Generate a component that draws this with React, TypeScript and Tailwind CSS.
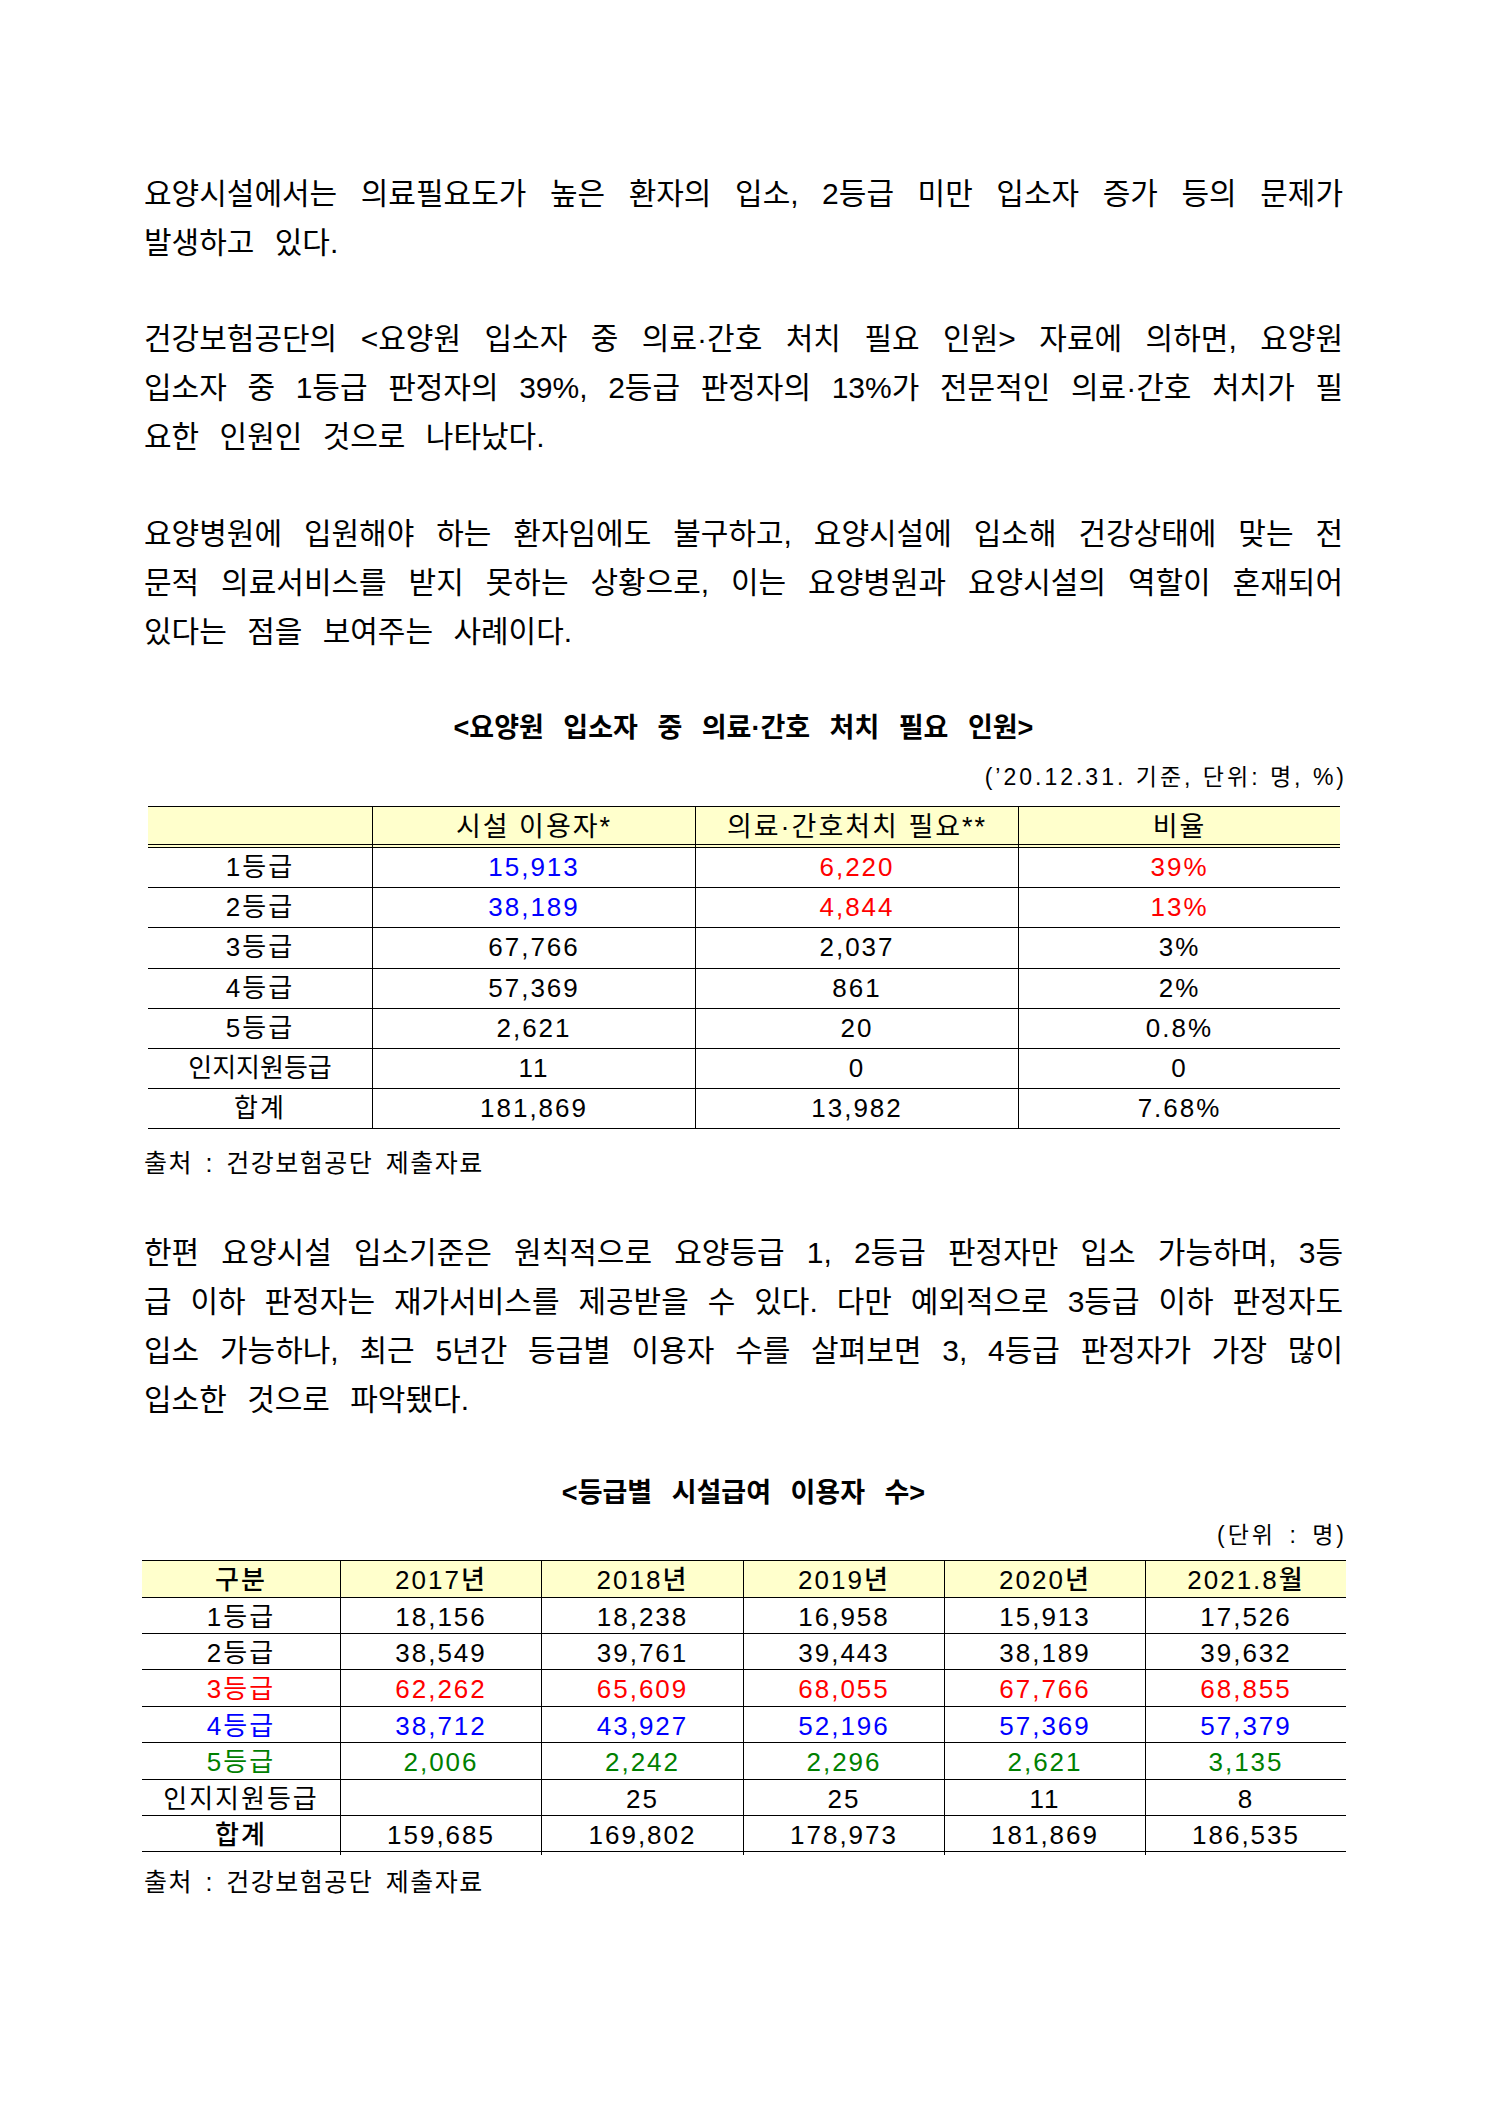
const font = "font-['Liberation_Sans','Noto_Sans_CJK_KR',sans-serif]"

type Line = { text: string; full?: boolean }

function Paragraph({ lines, className = "" }: { lines: Line[]; className?: string }) {
    return (
        <div className={`text-[30px] leading-[49px] ${className}`}>
            {lines.map((line, i) => (
                <div
                    key={i}
                    className={
                        line.full
                            ? "text-justify whitespace-nowrap [text-align-last:justify]"
                            : "whitespace-nowrap [word-spacing:12px]"
                    }
                >
                    {line.text}
                </div>
            ))}
        </div>
    )
}

type Cell = { v: string; c?: string }

const t1Rows: Cell[][] = [
    [{ v: "1등급" }, { v: "15,913", c: "text-[#0000ff]" }, { v: "6,220", c: "text-[#ff0000]" }, { v: "39%", c: "text-[#ff0000]" }],
    [{ v: "2등급" }, { v: "38,189", c: "text-[#0000ff]" }, { v: "4,844", c: "text-[#ff0000]" }, { v: "13%", c: "text-[#ff0000]" }],
    [{ v: "3등급" }, { v: "67,766" }, { v: "2,037" }, { v: "3%" }],
    [{ v: "4등급" }, { v: "57,369" }, { v: "861" }, { v: "2%" }],
    [{ v: "5등급" }, { v: "2,621" }, { v: "20" }, { v: "0.8%" }],
    [{ v: "인지지원등급", c: "tracking-[0px]" }, { v: "11" }, { v: "0" }, { v: "0" }],
    [{ v: "합계" }, { v: "181,869" }, { v: "13,982" }, { v: "7.68%" }],
]

const t2Rows: { cells: string[]; c?: string }[] = [
    { cells: ["1등급", "18,156", "18,238", "16,958", "15,913", "17,526"] },
    { cells: ["2등급", "38,549", "39,761", "39,443", "38,189", "39,632"] },
    { cells: ["3등급", "62,262", "65,609", "68,055", "67,766", "68,855"], c: "text-[#ff0000]" },
    { cells: ["4등급", "38,712", "43,927", "52,196", "57,369", "57,379"], c: "text-[#0000ff]" },
    { cells: ["5등급", "2,006", "2,242", "2,296", "2,621", "3,135"], c: "text-[#008000]" },
    { cells: ["인지지원등급", "", "25", "25", "11", "8"] },
    { cells: ["합계", "159,685", "169,802", "178,973", "181,869", "186,535"], c: "font-medium" },
]

function Table1() {
    const grid = "grid grid-cols-[224px_323px_323px_1fr]"
    return (
        <div className="ml-[4px] w-[1192px] border-t border-black text-[26px] tracking-[2px]">
            <div className={`${grid} h-[41px] border-b-[4px] border-double border-black bg-[#ffffcc] text-[27px]`}>
                {["", "시설 이용자*", "의료·간호처치 필요**", "비율"].map((h, i) => (
                    <div key={i} className={`flex items-center justify-center ${i > 0 ? "border-l border-black" : ""}`}>
                        {h}
                    </div>
                ))}
            </div>
            {t1Rows.map((row, r) => (
                <div key={r} className={`${grid} h-[40.2px] border-b border-black`}>
                    {row.map((cell, i) => (
                        <div
                            key={i}
                            className={`flex items-center justify-center ${i > 0 ? "border-l border-black" : ""} ${cell.c ?? ""}`}
                        >
                            {cell.v}
                        </div>
                    ))}
                </div>
            ))}
        </div>
    )
}

function Table2() {
    const grid = "grid grid-cols-[198px_201px_202px_201px_201px_1fr]"
    return (
        <div className="-ml-[2px] w-[1204px] border-t border-black text-[26px] tracking-[2px]">
            <div className={`${grid} h-[36.4px] border-b border-black bg-[#ffffcc] font-medium`}>
                {["구분", "2017년", "2018년", "2019년", "2020년", "2021.8월"].map((h, i) => (
                    <div key={i} className={`flex items-center justify-center ${i > 0 ? "border-l border-black" : ""}`}>
                        {h}
                    </div>
                ))}
            </div>
            {t2Rows.map((row, r) => (
                <div key={r} className={`${grid} h-[36.4px] border-b border-black ${row.c ?? ""}`}>
                    {row.cells.map((v, i) => (
                        <div
                            key={i}
                            className={`flex items-center justify-center ${i > 0 ? "border-l border-black" : ""}`}
                        >
                            {v}
                        </div>
                    ))}
                </div>
            ))}
        </div>
    )
}

export default function App() {
    return (
        <div className={`min-h-[2105px] w-[1488px] bg-white text-black ${font}`}>
            <div className="ml-[144px] w-[1199px] pt-[169px] pb-[200px]">
                <Paragraph
                    lines={[
                        { text: "요양시설에서는 의료필요도가 높은 환자의 입소, 2등급 미만 입소자 증가 등의 문제가", full: true },
                        { text: "발생하고 있다." },
                    ]}
                />

                <Paragraph
                    className="mt-[47px]"
                    lines={[
                        { text: "건강보험공단의 <요양원 입소자 중 의료·간호 처치 필요 인원> 자료에 의하면, 요양원", full: true },
                        { text: "입소자 중 1등급 판정자의 39%, 2등급 판정자의 13%가 전문적인 의료·간호 처치가 필", full: true },
                        { text: "요한 인원인 것으로 나타났다." },
                    ]}
                />

                <Paragraph
                    className="mt-[48px]"
                    lines={[
                        { text: "요양병원에 입원해야 하는 환자임에도 불구하고, 요양시설에 입소해 건강상태에 맞는 전", full: true },
                        { text: "문적 의료서비스를 받지 못하는 상황으로, 이는 요양병원과 요양시설의 역할이 혼재되어", full: true },
                        { text: "있다는 점을 보여주는 사례이다." },
                    ]}
                />

                <div className="mt-[52px] text-center text-[27px] font-bold leading-[40px] [word-spacing:12px]">
                    &lt;요양원 입소자 중 의료·간호 처치 필요 인원&gt;
                </div>
                <div className="-mr-[4px] mt-[14px] text-right text-[23px] leading-[30px] tracking-[3px]">
                    (’20.12.31. 기준, 단위: 명, %)
                </div>

                <div className="mt-[14px]">
                    <Table1 />
                </div>

                <div className="mt-[17px] text-[25px] leading-[34px] tracking-[1.5px] [word-spacing:4px]">
                    출처 : 건강보험공단 제출자료
                </div>

                <Paragraph
                    className="mt-[48px]"
                    lines={[
                        { text: "한편 요양시설 입소기준은 원칙적으로 요양등급 1, 2등급 판정자만 입소 가능하며, 3등", full: true },
                        { text: "급 이하 판정자는 재가서비스를 제공받을 수 있다. 다만 예외적으로 3등급 이하 판정자도", full: true },
                        { text: "입소 가능하나, 최근 5년간 등급별 이용자 수를 살펴보면 3, 4등급 판정자가 가장 많이", full: true },
                        { text: "입소한 것으로 파악됐다." },
                    ]}
                />

                <div className="mt-[49px] text-center text-[27px] font-bold leading-[40px] [word-spacing:12px]">
                    &lt;등급별 시설급여 이용자 수&gt;
                </div>
                <div className="-mr-[4px] mt-[7px] text-right text-[23px] leading-[30px] tracking-[3px] [word-spacing:4px]">
                    (단위 : 명)
                </div>

                <div className="mt-[10px]">
                    <Table2 />
                </div>

                <div className="mt-[13px] text-[25px] leading-[34px] tracking-[1.5px] [word-spacing:4px]">
                    출처 : 건강보험공단 제출자료
                </div>
            </div>
        </div>
    )
}
